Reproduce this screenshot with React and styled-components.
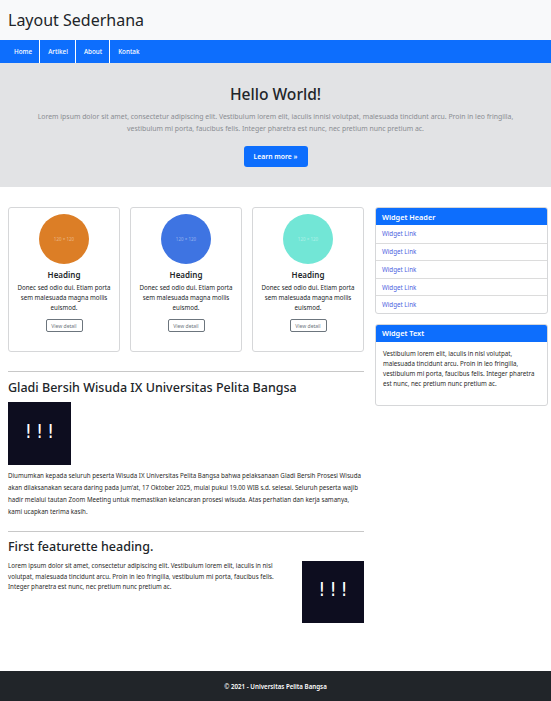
import React from "react";
import styled, { createGlobalStyle } from "styled-components";

const Global = createGlobalStyle`
  html, body { margin: 0; padding: 0; background: #fff; }
  body { font-family: "Noto Sans", "Open Sans", sans-serif; color: #212529; }
  * { box-sizing: border-box; }
`;

const Page = styled.div`
  width: 551px;
  min-height: 701px;
  display: flex;
  flex-direction: column;
`;

const Header = styled.header`
  height: 40px;
  background: #f8f9fa;
  display: flex;
  align-items: center;
  padding-left: 8px;
`;

const SiteTitle = styled.h1`
  margin: 0;
  font-size: 16px;
  font-weight: 400;
  color: #212529;
`;

const Nav = styled.nav`
  height: 23px;
  background: #0d6efd;
  display: flex;
  padding-left: 6px;
`;

const NavItem = styled.a`
  display: flex;
  align-items: center;
  padding: 0 7px 0 8px;
  color: #fff;
  font-size: 6.3px;
  font-weight: 500;
  text-decoration: none;
  border-right: ${(p) => (p.$last ? "none" : "1px solid #fff")};
`;

const Hero = styled.section`
  background: #e2e3e5;
  height: 124px;
  display: flex;
  flex-direction: column;
  align-items: center;
  padding-top: 21px;
`;

const HeroTitle = styled.h2`
  margin: 0;
  font-size: 15.6px;
  font-weight: 500;
  line-height: 20px;
  color: #212529;
`;

const HeroText = styled.p`
  margin: 7px 0 0;
  width: 490px;
  text-align: center;
  font-size: 6.9px;
  line-height: 12px;
  color: #8a8d92;
`;

const PrimaryButton = styled.a`
  margin-top: 11px;
  width: 64px;
  height: 21px;
  border-radius: 3px;
  background: #0d6efd;
  color: #fff;
  font-size: 6.8px;
  font-weight: 600;
  display: flex;
  align-items: center;
  justify-content: center;
`;

const Main = styled.main`
  display: grid;
  grid-template-columns: 356px 173px;
  column-gap: 11px;
  padding: 20px 0 0 8px;
  flex: 1;
`;

const Content = styled.div`
  display: flex;
  flex-direction: column;
`;

const Cards = styled.div`
  display: grid;
  grid-template-columns: repeat(3, 112px);
  column-gap: 10px;
`;

const Card = styled.div`
  height: 145px;
  border: 1px solid #d6d7d9;
  border-radius: 3px;
  display: flex;
  flex-direction: column;
  align-items: center;
  padding-top: 6px;
`;

const Circle = styled.div`
  width: 50px;
  height: 50px;
  border-radius: 50%;
  background: ${(p) => p.$color};
  display: flex;
  align-items: center;
  justify-content: center;
  font-size: 4.5px;
  color: rgba(255, 255, 255, 0.45);
`;

const CardHeading = styled.h3`
  margin: 6px 0 0;
  font-size: 8px;
  font-weight: 600;
  line-height: 10px;
`;

const CardText = styled.p`
  margin: 3px 0 0;
  width: 96px;
  text-align: center;
  font-size: 6.2px;
  line-height: 10px;
`;

const OutlineButton = styled.a`
  margin-top: 6px;
  width: 37px;
  height: 13px;
  border: 1px solid #6c757d;
  border-radius: 2px;
  display: flex;
  align-items: center;
  justify-content: center;
  font-size: 5px;
  color: #6c757d;
`;

const Rule = styled.hr`
  margin: ${(p) => p.$mt}px 0 0;
  border: 0;
  border-top: 1px solid #c8c8c8;
  width: 356px;
`;

const ArticleTitle = styled.h2`
  margin: ${(p) => p.$mt}px 0 0;
  font-size: 12.5px;
  font-weight: 500;
  line-height: 18px;
`;

const DarkImage = styled.div`
  width: ${(p) => p.$size}px;
  height: ${(p) => p.$size}px;
  flex: none;
  background: #0d0d1f;
  color: #fff;
  display: flex;
  align-items: center;
  justify-content: center;
  font-family: "DejaVu Sans Condensed", "DejaVu Sans", sans-serif;
  font-size: 20px;
  font-weight: 300;
  letter-spacing: 4px;
  padding: 0 0 6px 4px;
`;

const ArticleBlock = styled.div`
  margin-top: 5px;
`;

const BodyText = styled.p`
  margin: ${(p) => p.$mt || 0}px 0 0;
  font-size: 6.2px;
  line-height: ${(p) => p.$lh || 12}px;
  color: #2a2a2a;
`;

const Featurette = styled.div`
  display: flex;
  justify-content: space-between;
  margin-top: 5px;
`;

const FeatText = styled(BodyText)`
  width: 270px;
`;

const Sidebar = styled.aside`
  display: flex;
  flex-direction: column;
  gap: 10px;
`;

const Widget = styled.div`
  border: 1px solid #d6d7d9;
  border-radius: 3px;
  overflow: hidden;
`;

const WidgetHeader = styled.div`
  height: 17px;
  background: #0d6efd;
  color: #fff;
  font-size: 7.3px;
  font-weight: 600;
  display: flex;
  align-items: center;
  padding-left: 6px;
`;

const WidgetLink = styled.a`
  display: flex;
  align-items: center;
  height: 17.6px;
  padding-left: 6px;
  font-size: 6.2px;
  color: #4d5fe0;
  border-top: ${(p) => (p.$first ? "none" : "1px solid #dcdcdc")};
`;

const WidgetBody = styled.p`
  margin: 0;
  padding: 7px 7px 16px;
  font-size: 6.2px;
  line-height: 10px;
  color: #2a2a2a;
`;

const Footer = styled.footer`
  margin-top: 47px;
  height: 30px;
  background: #212529;
  color: #fff;
  font-size: 6.2px;
  font-weight: 600;
  display: flex;
  align-items: center;
  justify-content: center;
`;

const cards = ["#dc7e26", "#3e74e2", "#72e6d6"];

export default function App() {
  return (
    <Page>
      <Global />
      <Header>
        <SiteTitle>Layout Sederhana</SiteTitle>
      </Header>
      <Nav>
        <NavItem>Home</NavItem>
        <NavItem>Artikel</NavItem>
        <NavItem>About</NavItem>
        <NavItem $last>Kontak</NavItem>
      </Nav>
      <Hero>
        <HeroTitle>Hello World!</HeroTitle>
        <HeroText>
          Lorem ipsum dolor sit amet, consectetur adipiscing elit. Vestibulum lorem elit, iaculis innisl volutpat, malesuada tincidunt arcu. Proin in leo fringilla, vestibulum mi porta, faucibus felis. Integer pharetra est nunc, nec pretium nunc pretium ac.
        </HeroText>
        <PrimaryButton>Learn more »</PrimaryButton>
      </Hero>
      <Main>
        <Content>
          <Cards>
            {cards.map((c) => (
              <Card key={c}>
                <Circle $color={c}>120 × 120</Circle>
                <CardHeading>Heading</CardHeading>
                <CardText>Donec sed odio dui. Etiam porta sem malesuada magna mollis euismod.</CardText>
                <OutlineButton>View detail</OutlineButton>
              </Card>
            ))}
          </Cards>
          <Rule $mt={19} />
          <ArticleTitle $mt={7}>Gladi Bersih Wisuda IX Universitas Pelita Bangsa</ArticleTitle>
          <ArticleBlock>
            <DarkImage $size={63}>!!!</DarkImage>
            <BodyText $mt={5}>
              Diumumkan kepada seluruh peserta Wisuda IX Universitas Pelita Bangsa bahwa pelaksanaan Gladi Bersih Prosesi Wisuda akan dilaksanakan secara daring pada Jum'at, 17 Oktober 2025, mulai pukul 19.00 WIB s.d. selesai. Seluruh peserta wajib hadir melalui tautan Zoom Meeting untuk memastikan kelancaran prosesi wisuda. Atas perhatian dan kerja samanya, kami ucapkan terima kasih.
            </BodyText>
          </ArticleBlock>
          <Rule $mt={13} />
          <ArticleTitle $mt={6}>First featurette heading.</ArticleTitle>
          <Featurette>
            <FeatText $lh={10.5}>
              Lorem ipsum dolor sit amet, consectetur adipiscing elit. Vestibulum lorem elit, iaculis in nisl volutpat, malesuada tincidunt arcu. Proin in leo fringilla, vestibulum mi porta, faucibus felis. Integer pharetra est nunc, nec pretium nunc pretium ac.
            </FeatText>
            <DarkImage $size={62}>!!!</DarkImage>
          </Featurette>
        </Content>
        <Sidebar>
          <Widget>
            <WidgetHeader>Widget Header</WidgetHeader>
            {[0, 1, 2, 3, 4].map((i) => (
              <WidgetLink key={i} $first={i === 0}>Widget Link</WidgetLink>
            ))}
          </Widget>
          <Widget>
            <WidgetHeader>Widget Text</WidgetHeader>
            <WidgetBody>
              Vestibulum lorem elit, iaculis in nisl volutpat, malesuada tincidunt arcu. Proin in leo fringilla, vestibulum mi porta, faucibus felis. Integer pharetra est nunc, nec pretium nunc pretium ac.
            </WidgetBody>
          </Widget>
        </Sidebar>
      </Main>
      <Footer>© 2021 - Universitas Pelita Bangsa</Footer>
    </Page>
  );
}
